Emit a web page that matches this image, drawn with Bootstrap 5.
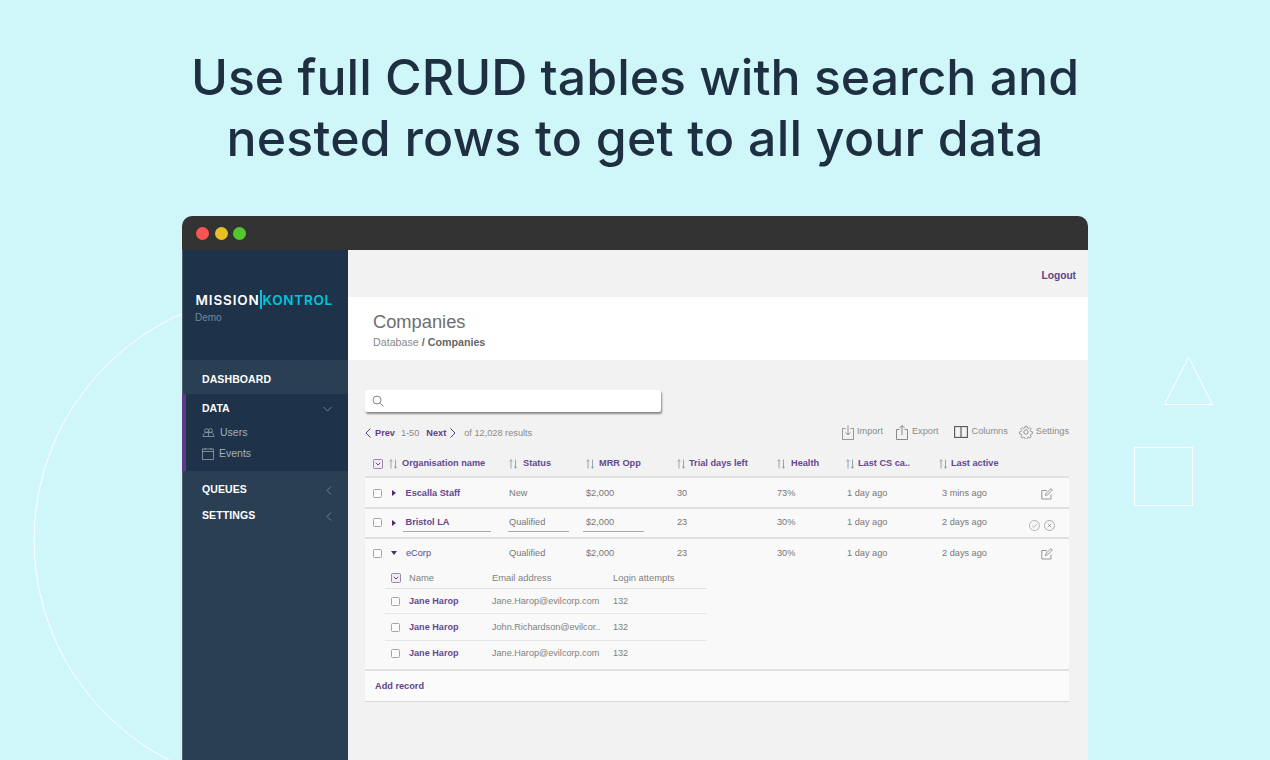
<!DOCTYPE html>
<html lang="en">
<head>
<meta charset="utf-8">
<title>CRUD tables</title>
<link href="https://cdn.jsdelivr.net/npm/bootstrap@5.3.0/dist/css/bootstrap.min.css" rel="stylesheet">
<style>
html,body{height:760px;overflow:hidden}
body{background:#cff7fa;font-family:"Liberation Sans",Arial,sans-serif;position:relative;color:#777}
.deco{position:absolute;top:0;left:0;width:1270px;height:760px}
.hero{position:relative;margin:0;padding-top:47px;height:216px;text-align:center;font-family:Inter,sans-serif;font-weight:450;font-size:50px;line-height:61px;color:#1d2f40;letter-spacing:0}
.heroline2{letter-spacing:.22px}
.appwin{position:relative;margin-left:182px;width:906px;height:544px;border-radius:10px 10px 0 0;overflow:hidden}
.titlebar{height:34px;background:#333;padding-left:14px;gap:5.5px}
.dot{width:13px;height:13px;border-radius:50%}
.appbody{height:510px}
.side{width:166px;background:#2b3f54;flex:none;font-size:10.5px;color:#fff;border-left:1px solid #51616f}
.brand{height:110px;background:#1e3349;padding:40px 0 0 12px}
.logo{font-family:Inter,sans-serif;font-weight:600;font-size:13.5px;line-height:20px;letter-spacing:.85px;color:#fff;padding-left:.5px}
.logo b{font-weight:600;color:#00c4de;letter-spacing:.7px}
.logo i{display:inline-block;width:2px;height:19px;background:#00c4de;margin:0 1px 0 0;vertical-align:-4px}
.demo{font-size:10px;color:#76899b}
.nitem{font-weight:700;padding-left:19px;padding-right:16px;letter-spacing:.1px}
.ndash{height:34px;padding-top:6px}
.ndata{height:77px;background:#1e3349;border-left:4px solid #5e3a86;margin-left:-1px;padding:8px 0 0 16px}
.nsub{color:#a3afba;font-size:10.5px;height:21px;gap:5px;font-weight:400}
.purple{color:#5f4288}
.content{background:#f2f2f2;min-width:0}
.logoutbar{height:47px;padding:20px 12px 0 0;text-align:right;font-size:10.2px;font-weight:700;line-height:12px}
.pagehead{height:63px;background:#fff;padding:14px 0 0 25px}
.pagehead h1{font-size:18.3px;font-weight:400;color:#6e6e6e;margin:0;line-height:22px}
.crumb{font-size:10.7px;line-height:14px;margin-top:2px;color:#888}
.crumb b{color:#666}
.work{padding:30px 19px 0 17px}
.searchbox{width:296px;height:22px;background:#fff;border-radius:2px;box-shadow:1px 2px 2px #8a8a8a;padding-left:7px}
.tools{height:38px;font-size:9.2px;color:#8b8b8b;padding-top:5px}
.pager{gap:6px;font-weight:700}
.pager span{font-weight:400;color:#8b8b8b}
.toolset{font-weight:400;margin-top:-3px}
.crud{table-layout:fixed;width:704px;border-collapse:collapse;font-size:9.2px;--bs-table-bg:transparent;margin:0;color:#777}
.crud>*>tr>*{padding:0;border:0;vertical-align:middle;color:#777}
.crud>thead>tr>th{height:27px;padding-top:2px;color:#644890;font-weight:700;border-bottom:2px solid #e1e1e1}
.crud>tbody>tr>td{background:#f9f9f9}
.crud>tbody>.r1>td{height:31px;padding-top:2px;border-bottom:2px solid #e1e1e1}
.crud>tbody>.r2>td{height:30px;border-bottom:2px solid #e1e1e1}
.crud>tbody>.r2>td.topcell{vertical-align:top}
.crud>tbody>.r3>td{height:28px;padding-top:2px}
.crud .nm{color:#644890;font-weight:700}
.cb{width:9px;height:9px;border:1px solid #a5a5a5;border-radius:1.5px;display:block;background:#fcfcfc;flex:none}
.caret{width:0;height:0;border-left:4.5px solid #4a2b73;border-top:3px solid transparent;border-bottom:3px solid transparent;flex:none}
.caret.open{border-top:4.5px solid #4a2b73;border-left:3px solid transparent;border-right:3px solid transparent;border-bottom:0}
.editline{display:block;border-bottom:1px solid #aaa;height:17px;line-height:15px;margin-top:6px}
.crud>tbody>tr>td.nestwrap{padding:0 0 3px 20px;border-bottom:2px solid #e1e1e1}
.nest{table-layout:fixed;width:322px;border-collapse:collapse;font-size:9.1px;--bs-table-bg:transparent;margin:0}
.nest th,.nest td{padding:0;background:transparent !important;box-shadow:none;vertical-align:middle;color:#808080;border:0}
.nest th{font-weight:400;font-size:9.4px;height:22px;padding-top:2px;border-bottom:1px solid #e1e1e1}
.nest td{height:27px;padding-top:2px;border-bottom:1px solid #e6e6e6}
.nest tr:first-child td{height:25px}
.nest tr:last-child td{border-bottom:0;height:26px;padding-top:1px}
.nest .nm{color:#644890;font-weight:700}
.addrow{height:31px;background:#fbfbfb;border-bottom:1px solid #d8d8d8;padding:2px 0 0 10px;font-weight:700;font-size:9.2px;width:704px}
</style>
</head>
<body>
<svg class="deco" viewBox="0 0 1270 760" fill="none" stroke="#fff" aria-hidden="true">
  <circle cx="281" cy="540" r="247" stroke-width="1"/>
  <path d="M1188.500 357L1212.500 404.500H1164.500Z" stroke-width="1"/>
  <rect x="1134.500" y="447.500" width="58" height="58" stroke-width="1"/>
</svg>

<h1 class="hero">Use full CRUD tables with search and<br><span class="heroline2">nested rows to get to all your data</span></h1>

<div class="appwin">
  <div class="titlebar d-flex align-items-center">
    <div class="dot" style="background:#fb5451"></div>
    <div class="dot" style="background:#e8c025"></div>
    <div class="dot" style="background:#52c82d"></div>
  </div>
  <div class="appbody d-flex">
    <aside class="side">
      <div class="brand">
        <div class="logo text-nowrap">MISSION<i></i><b>KONTROL</b></div>
        <div class="demo">Demo</div>
      </div>
      <div class="nitem ndash d-flex align-items-center">DASHBOARD</div>
      <div class="ndata">
        <div class="d-flex justify-content-between align-items-center fw-bold" style="height:14px;padding-right:16px">
          <span>DATA</span>
          <svg width="9" height="6" viewBox="0 0 9 6" fill="none" stroke="#6f8192"><path d="M.5 1l4 4 4-4"/></svg>
        </div>
        <div class="nsub d-flex align-items-center" style="margin-top:6px">
          <svg width="13" height="10" viewBox="0 0 13 10" fill="none" stroke="#93a1ae" stroke-width=".8"><ellipse cx="4.500" cy="2.500" rx="2" ry="1.800"/><ellipse cx="8.500" cy="2.500" rx="2" ry="1.800"/><path d="M1 8.500c0-2.500 1.500-4 3-4h5c1.500 0 3 1.500 3 4zM6.500 4.500v4"/></svg>
          <span>Users</span>
        </div>
        <div class="nsub d-flex align-items-center">
          <svg width="12" height="12" viewBox="0 0 12 12" fill="none" stroke="#93a1ae" stroke-width=".8"><rect x=".5" y="1" width="11" height="10.500"/><path d="M.5 3.500h11M3 0v2M9 0v2"/></svg>
          <span>Events</span>
        </div>
      </div>
      <div class="nitem d-flex justify-content-between align-items-center" style="height:26px;margin-top:6px">
        <span>QUEUES</span>
        <svg width="6" height="9" viewBox="0 0 6 9" fill="none" stroke="#6f8192"><path d="M5 .5l-4 4 4 4"/></svg>
      </div>
      <div class="nitem d-flex justify-content-between align-items-center" style="height:26px">
        <span>SETTINGS</span>
        <svg width="6" height="9" viewBox="0 0 6 9" fill="none" stroke="#6f8192"><path d="M5 .5l-4 4 4 4"/></svg>
      </div>
    </aside>
    <main class="content flex-grow-1">
      <div class="logoutbar purple">Logout</div>
      <div class="pagehead">
        <h1>Companies</h1>
        <div class="crumb">Database <b>/ Companies</b></div>
      </div>
      <div class="work">
        <div class="searchbox d-flex align-items-center">
          <svg width="12" height="12" viewBox="0 0 12 12" fill="none" stroke="#8a8a8a"><circle cx="5" cy="5" r="4"/><path d="M8 8l3.500 3.500"/></svg>
        </div>
        <div class="tools d-flex justify-content-between align-items-center">
          <div class="pager d-flex align-items-center">
            <div class="purple d-flex align-items-center gap-1">
              <svg width="6" height="10" viewBox="0 0 6 10" fill="none" stroke="#5b3a82"><path d="M5.500.5L1 5l4.500 4.500"/></svg>Prev
            </div>
            <span>1-50</span>
            <div class="purple d-flex align-items-center gap-1" style="margin-left:1px">Next
              <svg width="6" height="10" viewBox="0 0 6 10" fill="none" stroke="#5b3a82"><path d="M.5.5L5 5 .5 9.500"/></svg>
            </div>
            <span style="margin-left:2px">of 12,028 results</span>
          </div>
          <div class="toolset d-flex align-items-center">
            <div class="d-flex align-items-center" style="gap:3px;margin-right:13px">
              <svg width="12" height="15" viewBox="0 0 12 15" fill="none" stroke="#8b8b8b" stroke-width=".9"><path d="M3.500 3.500H.5v11h11v-11h-3M6 .5v9M3.500 7.500L6 10l2.500-2.500"/></svg>Import
            </div>
            <div class="d-flex align-items-center" style="gap:4px;margin-right:15px">
              <svg width="12" height="15" viewBox="0 0 12 15" fill="none" stroke="#7f7f7f" stroke-width=".9"><path d="M3.500 4.500H.5v10h11v-10h-3M6 10V.8M3.500 3L6 .5 8.500 3"/></svg>Export
            </div>
            <div class="d-flex align-items-center" style="gap:4px;margin-right:11px">
              <svg width="14" height="12" viewBox="0 0 14 12" fill="none" stroke="#555" stroke-width="1.100"><rect x=".6" y=".6" width="12.800" height="10.800"/><path d="M7 .6v10.800"/></svg>Columns
            </div>
            <div class="d-flex align-items-center" style="gap:3px">
              <svg width="14" height="14" viewBox="0 0 14 14" fill="none" stroke="#7f7f7f" stroke-width=".8"><circle cx="7" cy="7" r="2.200"/><path d="M6 .6h2l.4 1.900 1.300.6 1.700-1 1.400 1.400-1 1.700.6 1.300 1.900.4v2l-1.900.4-.6 1.300 1 1.700-1.400 1.400-1.700-1-1.300.6-.4 1.900H6l-.4-1.900-1.300-.6-1.700 1-1.400-1.400 1-1.700-.6-1.300-1.900-.4v-2l1.900-.4.6-1.300-1-1.700 1.400-1.400 1.700 1 1.300-.6z" transform="translate(.7 .7) scale(.9)"/></svg>Settings
            </div>
          </div>
        </div>

        <table class="table crud">
          <colgroup><col style="width:144px"><col style="width:77px"><col style="width:91px"><col style="width:100px"><col style="width:70px"><col style="width:95px"><col style="width:85px"><col style="width:42px"></colgroup>
          <thead>
            <tr>
              <th><div class="d-flex align-items-center" style="padding-left:8px;gap:6px">
                <svg width="10" height="10" viewBox="0 0 10 10" fill="#efecf3" stroke="#8d7aa8" stroke-width=".9"><rect x=".5" y=".5" width="9" height="9" rx="1"/><path d="M2.800 3.800L5 6l2.200-2.200" stroke="#5b3a82" fill="none"/></svg>
                <span class="d-flex align-items-center" style="gap:4px"><svg width="9" height="10" viewBox="0 0 9 10" fill="none" stroke="#7f8f9e" stroke-width=".8"><path d="M2 9.500V.8M.6 2.200L2 .8 3.400 2.200M6.500.5v8.700M5.100 7.800L6.500 9.200l1.400-1.400"/></svg>Organisation name</span></div></th>
              <th><span class="d-flex align-items-center" style="gap:5px"><svg width="9" height="10" viewBox="0 0 9 10" fill="none" stroke="#7f8f9e" stroke-width=".8"><path d="M2 9.500V.8M.6 2.200L2 .8 3.400 2.200M6.500.5v8.700M5.100 7.800L6.500 9.200l1.400-1.400"/></svg>Status</span></th>
              <th><span class="d-flex align-items-center" style="gap:4px"><svg width="9" height="10" viewBox="0 0 9 10" fill="none" stroke="#7f8f9e" stroke-width=".8"><path d="M2 9.500V.8M.6 2.200L2 .8 3.400 2.200M6.500.5v8.700M5.100 7.800L6.500 9.200l1.400-1.400"/></svg>MRR Opp</span></th>
              <th><span class="d-flex align-items-center" style="gap:3px"><svg width="9" height="10" viewBox="0 0 9 10" fill="none" stroke="#7f8f9e" stroke-width=".8"><path d="M2 9.500V.8M.6 2.200L2 .8 3.400 2.200M6.500.5v8.700M5.100 7.800L6.500 9.200l1.400-1.400"/></svg>Trial days left</span></th>
              <th><span class="d-flex align-items-center" style="gap:5px"><svg width="9" height="10" viewBox="0 0 9 10" fill="none" stroke="#7f8f9e" stroke-width=".8"><path d="M2 9.500V.8M.6 2.200L2 .8 3.400 2.200M6.500.5v8.700M5.100 7.800L6.500 9.200l1.400-1.400"/></svg>Health</span></th>
              <th><span class="d-flex align-items-center" style="gap:3px;margin-left:-1px"><svg width="9" height="10" viewBox="0 0 9 10" fill="none" stroke="#7f8f9e" stroke-width=".8"><path d="M2 9.500V.8M.6 2.200L2 .8 3.400 2.200M6.500.5v8.700M5.100 7.800L6.500 9.200l1.400-1.400"/></svg>Last CS ca..</span></th>
              <th><span class="d-flex align-items-center" style="gap:3px;margin-left:-3px"><svg width="9" height="10" viewBox="0 0 9 10" fill="none" stroke="#7f8f9e" stroke-width=".8"><path d="M2 9.500V.8M.6 2.200L2 .8 3.400 2.200M6.500.5v8.700M5.100 7.800L6.500 9.200l1.400-1.400"/></svg>Last active</span></th>
              <th></th>
            </tr>
          </thead>
          <tbody>
            <tr class="r1">
              <td><div class="d-flex align-items-center" style="padding-left:8px"><span class="cb"></span><span class="caret" style="margin:0 10px 0 9.500px"></span><span class="nm">Escalla Staff</span></div></td>
              <td>New</td><td>$2,000</td><td>30</td><td>73%</td><td>1 day ago</td><td>3 mins ago</td>
              <td><svg width="12" height="12" viewBox="0 0 12 12" fill="none" stroke="#8b8b8b" stroke-width=".9" style="margin-left:14px;display:block"><path d="M10 6.500v4.500H.8V2.500h5M4.500 7.500l.4-2L10 .6l1.400 1.400L6.400 7z"/></svg></td>
            </tr>
            <tr class="r2">
              <td class="topcell"><div class="d-flex" style="padding-left:8px"><span class="cb" style="margin-top:9px"></span><span class="caret" style="margin:11px 7px 0 9.500px"></span><span class="nm editline" style="width:88px;padding-left:3px">Bristol LA</span></div></td>
              <td class="topcell"><span class="editline" style="width:61px;margin-left:-1px;padding-left:1px">Qualified</span></td>
              <td class="topcell"><span class="editline" style="width:61px;margin-left:-3px;padding-left:3px">$2,000</span></td>
              <td>23</td><td>30%</td><td>1 day ago</td><td>2 days ago</td>
              <td class="topcell"><div class="d-flex gap-1" style="margin:11px 0 0 2px"><svg width="11" height="11" viewBox="0 0 11 11" fill="none" stroke="#9a9a9a" stroke-width=".7"><circle cx="5.500" cy="5.500" r="5"/><path d="M3 5.700l1.800 1.700L8 4"/></svg><svg width="11" height="11" viewBox="0 0 11 11" fill="none" stroke="#8b8b8b" stroke-width=".7"><circle cx="5.500" cy="5.500" r="5"/><path d="M3.700 3.700l3.600 3.600M7.300 3.700L3.700 7.300"/></svg></div></td>
            </tr>
            <tr class="r3">
              <td><div class="d-flex align-items-center" style="padding-left:8px"><span class="cb"></span><span class="caret open" style="margin:0 9px 0 9px"></span><span class="nm fw-normal">eCorp</span></div></td>
              <td>Qualified</td><td>$2,000</td><td>23</td><td>30%</td><td>1 day ago</td><td>2 days ago</td>
              <td><svg width="12" height="12" viewBox="0 0 12 12" fill="none" stroke="#8b8b8b" stroke-width=".9" style="margin-left:14px;display:block"><path d="M10 6.500v4.500H.8V2.500h5M4.500 7.500l.4-2L10 .6l1.400 1.400L6.400 7z"/></svg></td>
            </tr>
            <tr>
              <td colspan="8" class="nestwrap">
                <table class="table nest">
                  <colgroup><col style="width:107px"><col style="width:121px"><col></colgroup>
                  <thead>
                    <tr>
                      <th><div class="d-flex align-items-center" style="padding-left:6px;gap:8px"><svg width="10" height="10" viewBox="0 0 10 10" fill="#efecf3" stroke="#8d7aa8" stroke-width=".9"><rect x=".5" y=".5" width="9" height="9" rx="1"/><path d="M2.800 3.800L5 6l2.200-2.200" stroke="#5b3a82" fill="none"/></svg>Name</div></th>
                      <th>Email address</th><th>Login attempts</th>
                    </tr>
                  </thead>
                  <tbody>
                    <tr><td><div class="d-flex align-items-center" style="padding-left:6px;gap:9px"><span class="cb"></span><span class="nm">Jane Harop</span></div></td><td>Jane.Harop@evilcorp.com</td><td>132</td></tr>
                    <tr><td><div class="d-flex align-items-center" style="padding-left:6px;gap:9px"><span class="cb"></span><span class="nm">Jane Harop</span></div></td><td>John.Richardson@evilcor..</td><td>132</td></tr>
                    <tr><td><div class="d-flex align-items-center" style="padding-left:6px;gap:9px"><span class="cb"></span><span class="nm">Jane Harop</span></div></td><td>Jane.Harop@evilcorp.com</td><td>132</td></tr>
                  </tbody>
                </table>
              </td>
            </tr>
          </tbody>
        </table>
        <div class="addrow purple d-flex align-items-center">Add record</div>
      </div>
    </main>
  </div>
</div>
<script src="https://cdn.jsdelivr.net/npm/bootstrap@5.3.0/dist/js/bootstrap.bundle.min.js"></script>
</body>
</html>
